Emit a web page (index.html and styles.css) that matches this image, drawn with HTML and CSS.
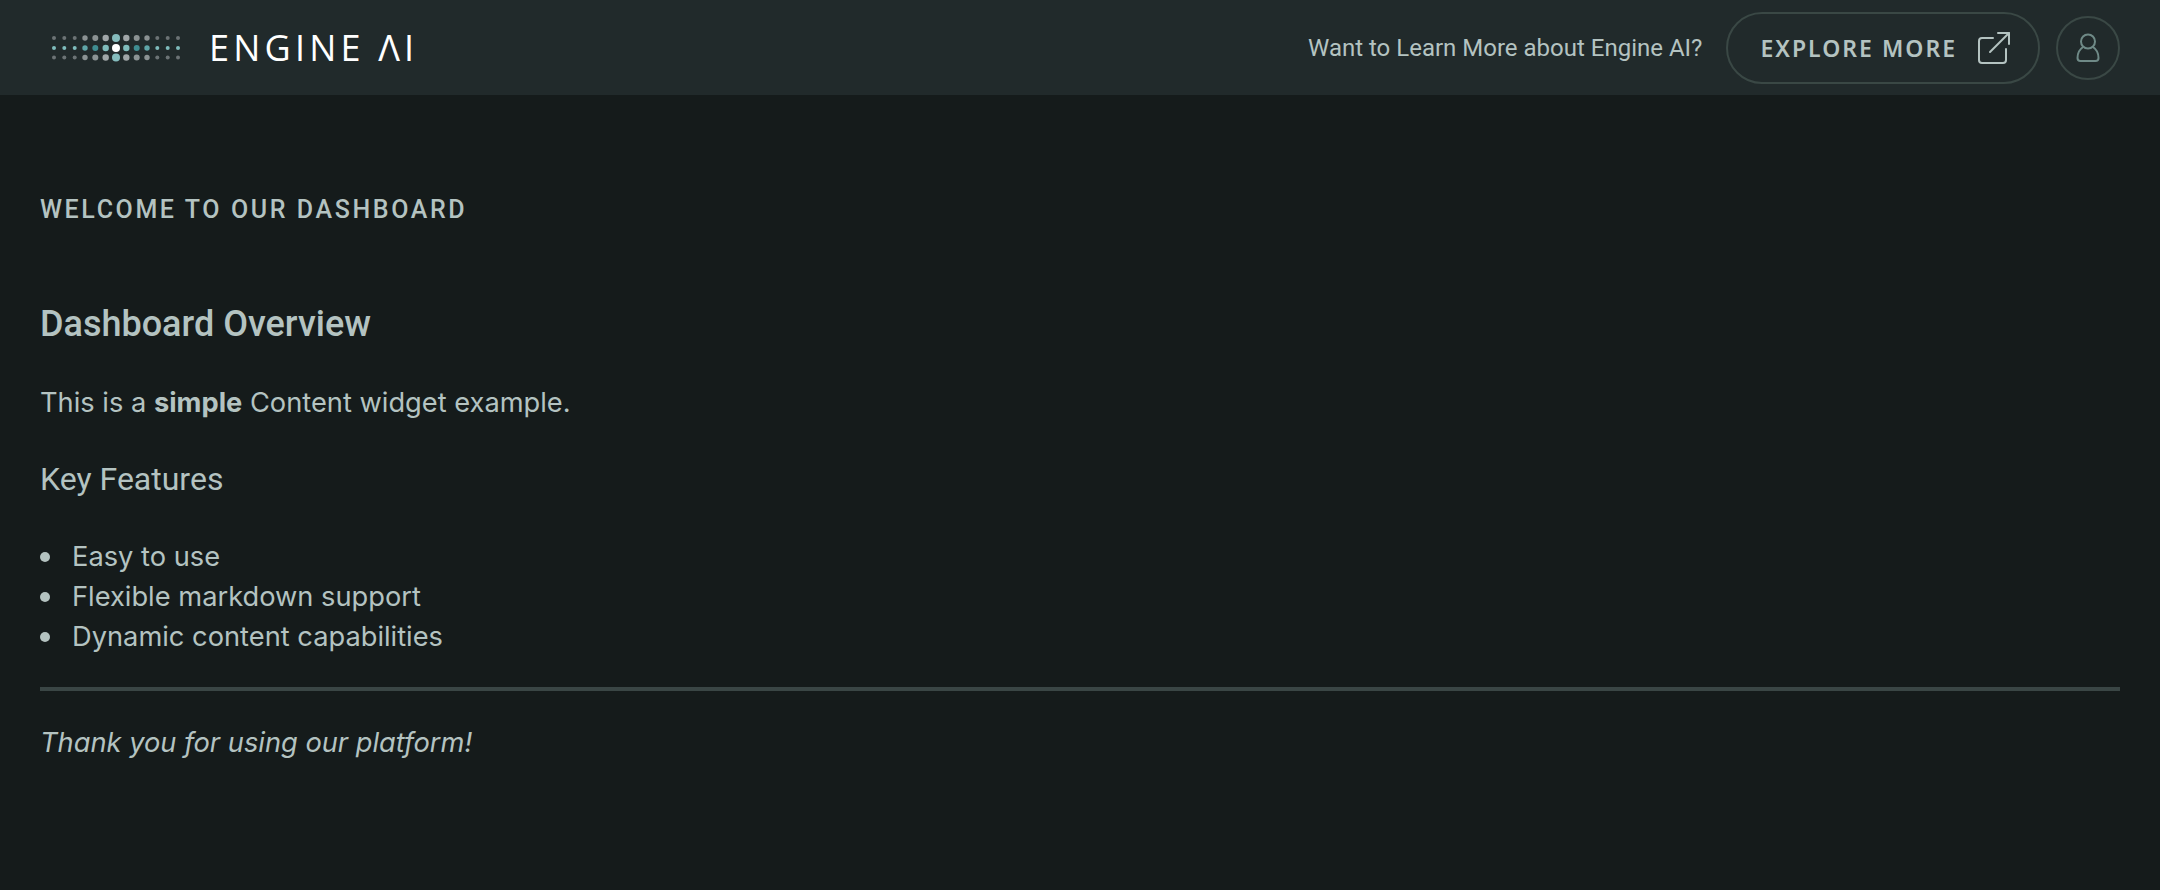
FILE: index.html
```html
<!DOCTYPE html>
<html lang="en">
<head>
    <meta charset="UTF-8">
    <meta name="viewport" content="width=device-width, initial-scale=1.0">
    <title>Engine AI Dashboard</title>
    <link rel="stylesheet" href="styles.css">
</head>
<body>
    <header class="topbar">
        <div class="brand">
            <svg class="brand-dots" width="132" height="30" viewBox="0 0 132 30">
                <g fill="#6c7375">
                    <circle cx="2" cy="5" r="2"/><circle cx="12.3" cy="5" r="2"/><circle cx="22.7" cy="5" r="2"/>
                    <circle cx="33" cy="5" r="2.7" fill="#8b9293"/><circle cx="43.3" cy="5" r="3" fill="#8b9293"/><circle cx="53.7" cy="5" r="3.2" fill="#a0a6a8"/>
                    <circle cx="64" cy="5" r="4" fill="#85bcbd"/>
                    <circle cx="74.3" cy="5" r="3.2" fill="#a0a6a8"/><circle cx="84.7" cy="5" r="3" fill="#8b9293"/><circle cx="95" cy="5" r="2.7" fill="#8b9293"/>
                    <circle cx="105.3" cy="5" r="2"/><circle cx="115.7" cy="5" r="2"/><circle cx="126" cy="5" r="2"/>
                </g>
                <g fill="#7fbcbc">
                    <circle cx="2" cy="15" r="2"/><circle cx="12.3" cy="15" r="2"/><circle cx="22.7" cy="15" r="2"/>
                    <circle cx="33" cy="15" r="2.7" fill="#5fa5a7"/><circle cx="43.3" cy="15" r="3" fill="#3f8d91"/><circle cx="53.7" cy="15" r="3.2"/>
                    <circle cx="64" cy="15" r="4" fill="#ffffff"/>
                    <circle cx="74.3" cy="15" r="3.2"/><circle cx="84.7" cy="15" r="3" fill="#3f8d91"/><circle cx="95" cy="15" r="2.7" fill="#5fa5a7"/>
                    <circle cx="105.3" cy="15" r="2"/><circle cx="115.7" cy="15" r="2"/><circle cx="126" cy="15" r="2"/>
                </g>
                <g fill="#6c7375">
                    <circle cx="2" cy="24.5" r="2"/><circle cx="12.3" cy="24.5" r="2"/><circle cx="22.7" cy="24.5" r="2"/>
                    <circle cx="33" cy="24.5" r="2.7" fill="#8b9293"/><circle cx="43.3" cy="24.5" r="3" fill="#8b9293"/><circle cx="53.7" cy="24.5" r="3.2" fill="#a0a6a8"/>
                    <circle cx="64" cy="24.5" r="4" fill="#85bcbd"/>
                    <circle cx="74.3" cy="24.5" r="3.2" fill="#a0a6a8"/><circle cx="84.7" cy="24.5" r="3" fill="#8b9293"/><circle cx="95" cy="24.5" r="2.7" fill="#8b9293"/>
                    <circle cx="105.3" cy="24.5" r="2"/><circle cx="115.7" cy="24.5" r="2"/><circle cx="126" cy="24.5" r="2"/>
                </g>
            </svg>
            <span class="brand-name">ENGINE ΛI</span>
        </div>
        <div class="topbar-right">
            <span class="learn-more">Want to Learn More about Engine AI?</span>
            <a class="explore-btn" href="#">
                EXPLORE MORE
                <svg width="34" height="34" viewBox="0 0 34 34" fill="none" stroke="#b4c3c1" stroke-width="2" stroke-linecap="round" stroke-linejoin="round">
                    <path d="M16 7H5a3 3 0 0 0-3 3v19a3 3 0 0 0 3 3h21a3 3 0 0 0 3-3V18"/>
                    <path d="M13 21L32 2"/>
                    <path d="M21 2h11v11"/>
                </svg>
            </a>
            <div class="avatar">
                <svg width="24" height="30" viewBox="0 0 24 30" fill="none" stroke="#6f8a87" stroke-width="2" stroke-linejoin="round">
                    <circle cx="12" cy="8.500" r="7"/>
                    <path d="M7 14c-3 2-5.500 6-5.500 11 0 2 1 3 3 3h15c2 0 3-1 3-3 0-5-2.500-9-5.500-11"/>
                </svg>
            </div>
        </div>
    </header>

    <main class="content">
        <h1 class="page-title">WELCOME TO OUR DASHBOARD</h1>
        <h2>Dashboard Overview</h2>
        <p>This is a <strong>simple</strong> Content widget example.</p>
        <h3>Key Features</h3>
        <ul>
            <li>Easy to use</li>
            <li>Flexible markdown support</li>
            <li>Dynamic content capabilities</li>
        </ul>
        <hr>
        <p><em>Thank you for using our platform!</em></p>
    </main>
</body>
</html>
```

FILE: styles.css
```css
body {
    margin: 0;
    background-color: #151b1b;
    color: #b4c3c1;
    font-family: Inter, sans-serif;
}

.topbar {
    display: flex;
    align-items: center;
    justify-content: space-between;
    height: 95px;
    padding: 0 40px 0 52px;
    background-color: #212a2b;
}

.brand {
    display: flex;
    align-items: center;
    gap: 25px;
}

.brand-dots {
    display: block;
}

.brand-name {
    font-family: "Open Sans", sans-serif;
    font-weight: 400;
    font-size: 36px;
    line-height: 1;
    letter-spacing: 4.2px;
    color: #ffffff;
}

.topbar-right {
    display: flex;
    align-items: center;
}

.learn-more {
    font-family: Roboto, sans-serif;
    font-size: 24px;
    margin-right: 24px;
}

.explore-btn {
    display: flex;
    align-items: center;
    gap: 20px;
    box-sizing: border-box;
    height: 72px;
    padding: 0 27px 0 32px;
    border: 2px solid #3a4845;
    border-radius: 36px;
    color: #b4c3c1;
    font-family: "Noto Sans", sans-serif;
    font-size: 23px;
    font-weight: 600;
    letter-spacing: 2px;
    text-decoration: none;
}

.avatar {
    display: flex;
    align-items: center;
    justify-content: center;
    box-sizing: border-box;
    width: 64px;
    height: 64px;
    margin-left: 16px;
    border: 2px solid #3a4845;
    border-radius: 50%;
}

.content {
    padding: 0 40px;
}

.page-title {
    margin: 0;
    padding-top: 100px;
    font-family: Roboto, sans-serif;
    font-size: 25px;
    font-weight: 500;
    line-height: 30px;
    letter-spacing: 2.6px;
}

h2 {
    margin: 77px 0 0;
    font-family: Roboto, sans-serif;
    font-size: 36px;
    font-weight: 500;
    line-height: 44px;
}

p {
    margin: 37px 0 0;
    font-size: 27.25px;
    font-weight: 400;
    line-height: 40px;
}

strong {
    font-weight: 700;
}

h3 {
    margin: 36px 0 0;
    font-family: Roboto, sans-serif;
    font-size: 32px;
    font-weight: 400;
    line-height: 40px;
}

ul {
    margin: 38px 0 0;
    padding: 0;
    list-style: none;
    font-size: 27.25px;
    font-weight: 400;
    line-height: 40px;
}

li {
    display: flex;
    align-items: center;
    gap: 22px;
}

li::before {
    content: "";
    width: 10px;
    height: 10px;
    border-radius: 50%;
    background-color: #b4c3c1;
}

hr {
    height: 4px;
    margin: 30px 0 0;
    border: 0;
    background-color: #3a4645;
}

hr + p {
    margin-top: 32px;
}
```
